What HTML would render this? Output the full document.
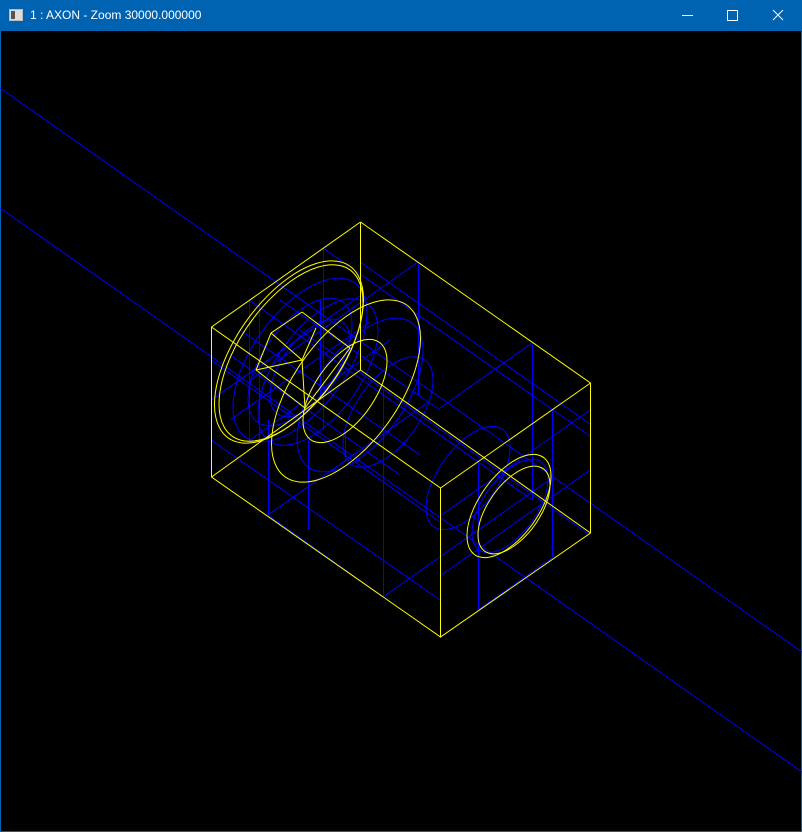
<!DOCTYPE html>
<html><head><meta charset="utf-8"><style>
html,body{margin:0;padding:0;background:#000;width:802px;height:832px;overflow:hidden;font-family:"Liberation Sans",sans-serif}
.tb{position:absolute;left:0;top:0;width:802px;height:31px;background:#0063b1}
.tt{position:absolute;left:30px;top:8px;color:#fff;font-size:12px}
.fr{position:absolute;left:0;top:31px;width:800px;height:800px;border:1px solid #0063b1;border-top:none}
svg{position:absolute;left:0;top:0}
</style></head><body>
<div class="tb"></div>
<div class="tt">1 : AXON - Zoom 30000.000000</div>
<div class="fr"></div>
<svg width="802" height="832" viewBox="0 0 802 832">
<g fill="none" stroke="#fff" stroke-width="1">
<rect x="9.5" y="9.5" width="13" height="11" fill="#ddd" stroke="#bbb"/>
<rect x="11" y="11" width="4" height="8" fill="#555" stroke="none"/>
<line x1="682" y1="15.5" x2="693" y2="15.5"/>
<rect x="727.5" y="10.5" width="10" height="10"/>
<path d="M773 10L783 20M783 10L773 20"/>
</g>
<g fill="none" stroke="#0000ff" stroke-width="1">
<line x1="0" y1="88" x2="802" y2="652"/>
<line x1="0" y1="208" x2="802" y2="772"/>
<line x1="249.5" y1="300" x2="249.5" y2="443"/>
<line x1="259.5" y1="300" x2="259.5" y2="440"/>
<line x1="323.5" y1="248" x2="323.5" y2="430"/>
<line x1="320.5" y1="300" x2="320.5" y2="400"/>
<line x1="268.5" y1="420" x2="268.5" y2="515"/>
<line x1="308.5" y1="440" x2="308.5" y2="530"/>
<line x1="383.5" y1="390" x2="383.5" y2="597"/>
<line x1="418.5" y1="262" x2="418.5" y2="395"/>
<line x1="478.5" y1="463" x2="478.5" y2="610"/>
<line x1="532.5" y1="343" x2="532.5" y2="500"/>
<line x1="552.5" y1="410" x2="552.5" y2="558"/>
<line x1="345.5" y1="432" x2="345.5" y2="462"/>
<line x1="249" y1="300" x2="532" y2="500"/>
<line x1="323" y1="248" x2="590" y2="436"/>
<line x1="360" y1="262" x2="590" y2="424"/>
<line x1="211" y1="360" x2="440" y2="522"/>
<line x1="268" y1="515" x2="383" y2="597"/>
<line x1="211" y1="440" x2="440" y2="600"/>
<line x1="383" y1="597" x2="552" y2="478"/>
<line x1="478" y1="610" x2="552" y2="558"/>
<line x1="418" y1="262" x2="249" y2="381"/>
<line x1="532" y1="343" x2="440" y2="408"/>
<line x1="590" y1="410" x2="440" y2="516"/>
<line x1="590" y1="470" x2="440" y2="576"/>
<line x1="268" y1="515" x2="430" y2="401"/>
<line x1="211" y1="400" x2="360" y2="296"/>
<line x1="300" y1="330" x2="590" y2="535"/>
<line x1="240" y1="330" x2="420" y2="455"/>
<line x1="230" y1="355" x2="400" y2="475"/>
<line x1="280" y1="300" x2="440" y2="410"/>
<line x1="230" y1="420" x2="370" y2="322"/>
<line x1="250" y1="440" x2="390" y2="340"/>
</g>
<g fill="none" stroke="#0000ff" stroke-width="1">
<circle r="1" vector-effect="non-scaling-stroke" transform="matrix(-67 47 0 67 300 360)"/>
<circle r="1" vector-effect="non-scaling-stroke" transform="matrix(-60 42 0 60 318 372)"/>
<circle r="1" vector-effect="non-scaling-stroke" transform="matrix(-52 37 0 52 300 362)"/>
<circle r="1" vector-effect="non-scaling-stroke" transform="matrix(-40 28 0 40 310 368)"/>
<circle r="1" vector-effect="non-scaling-stroke" transform="matrix(-63 44 0 63 360 395)"/>
<circle r="1" vector-effect="non-scaling-stroke" transform="matrix(-45 32 0 45 388 412)"/>
<circle r="1" vector-effect="non-scaling-stroke" transform="matrix(-42 30 0 42 468 478)"/>
<circle r="1" vector-effect="non-scaling-stroke" transform="matrix(-38 27 0 38 510 506)"/>
</g>
<g fill="none" stroke="#ffff00" stroke-width="1">
<path d="M360.5 222L211.5 327V477L440.5 637V488L211.5 327M360.5 222L590.5 383V533L440.5 637M440.5 488L590.5 383M360.5 222V370L211.5 477M360.5 370L590.5 533"/>
<circle r="1" vector-effect="non-scaling-stroke" transform="matrix(-72 51 0 72 291 353)"/>
<circle r="1" vector-effect="non-scaling-stroke" transform="matrix(-74.5 52.5 0 74.5 289 352)"/>
<circle r="1" vector-effect="non-scaling-stroke" transform="matrix(-74.5 52.5 0 74.5 346 391)"/>
<circle r="1" vector-effect="non-scaling-stroke" transform="matrix(-42 30 0 42 345 391)"/>
<circle r="1" vector-effect="non-scaling-stroke" transform="matrix(-42 30 0 42 509 506)"/>
<circle r="1" vector-effect="non-scaling-stroke" transform="matrix(-36 25 0 36 514 510)"/>
<path d="M302 312L271 333L256 370L305 408L350 348L302 312M271 333L302 360L316 328M302 360L305 408M256 370L302 360"/>
</g>
</svg>
</body></html>
